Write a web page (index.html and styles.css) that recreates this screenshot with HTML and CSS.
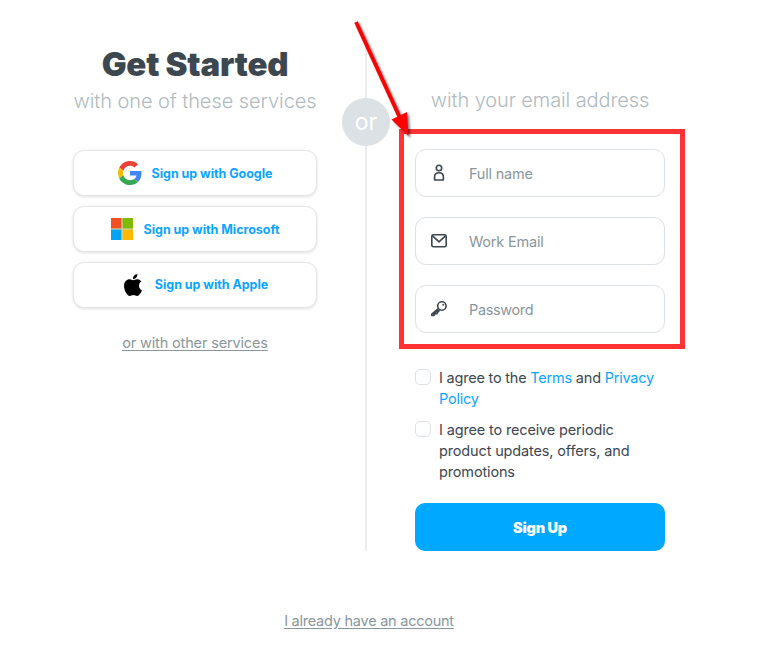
FILE: index.html
```html
<!DOCTYPE html>
<html lang="en">
<head>
<meta charset="utf-8">
<title>Get Started</title>
<link rel="stylesheet" href="styles.css">
</head>
<body>
<main class="signup">
  <div class="columns">
    <section class="services">
      <h1 class="title">Get Started</h1>
      <p class="subtitle first"><span>with one of these services</span></p>
      <div class="service-list">
        <button class="service google">
          <svg width="24" height="24" viewBox="0 0 48 48"><path fill="#EA4335" d="M24 9.5c3.54 0 6.71 1.22 9.21 3.6l6.85-6.85C35.9 2.38 30.47 0 24 0 14.62 0 6.51 5.38 2.56 13.22l7.98 6.19C12.43 13.72 17.74 9.5 24 9.5z"/><path fill="#4285F4" d="M46.98 24.55c0-1.57-.15-3.09-.38-4.55H24v9.02h12.94c-.58 2.96-2.26 5.48-4.78 7.18l7.73 6c4.51-4.18 7.09-10.36 7.09-17.65z"/><path fill="#FBBC05" d="M10.53 28.59c-.48-1.45-.76-2.99-.76-4.59s.27-3.14.76-4.59l-7.98-6.19C.92 16.46 0 20.12 0 24c0 3.88.92 7.54 2.56 10.78l7.97-6.19z"/><path fill="#34A853" d="M24 48c6.48 0 11.93-2.13 15.89-5.81l-7.73-6c-2.15 1.45-4.92 2.3-8.16 2.3-6.26 0-11.57-4.22-13.47-9.91l-7.98 6.19C6.51 42.62 14.62 48 24 48z"/></svg>
          <span>Sign up with Google</span>
        </button>
        <button class="service microsoft">
          <svg width="22" height="22" viewBox="0 0 22 22"><path fill="#c8d6b0" d="M0 0h22v22H0z"/><path fill="#f25022" d="M0 0h10.4v10.4H0z"/><path fill="#7fba00" d="M11.6 0H22v10.4H11.6z"/><path fill="#00a4ef" d="M0 11.6h10.4V22H0z"/><path fill="#ffb900" d="M11.6 11.6H22V22H11.6z"/></svg>
          <span>Sign up with Microsoft</span>
        </button>
        <button class="service apple">
          <svg width="18" height="22" viewBox="0 0 814 1000"><path d="M788.1 340.9c-5.8 4.5-108.2 62.2-108.2 190.5 0 148.4 130.3 200.9 134.2 202.2-.6 3.2-20.7 71.9-68.7 141.9-42.8 61.6-87.5 123.1-155.5 123.1s-85.5-39.5-164-39.5c-76.5 0-103.7 40.8-165.9 40.8s-105.6-57-155.5-127C46.7 790.7 0 663 0 541.8c0-194.4 126.4-297.5 250.8-297.5 66.1 0 121.2 43.4 162.7 43.4 39.5 0 101.1-46 176.3-46 28.5 0 130.9 2.6 198.3 99.2zM554.1 159.4c31.1-36.9 53.1-88.1 53.1-139.3 0-7.1-.6-14.3-1.9-20.1-50.6 1.9-110.8 33.7-147.1 75.8-28.5 32.4-55.1 83.6-55.1 135.5 0 7.8 1.3 15.6 1.9 18.1 3.2.6 8.4 1.3 13.6 1.3 45.4 0 102.5-30.4 135.5-71.3z"/></svg>
          <span>Sign up with Apple</span>
        </button>
      </div>
      <a class="link other">or with other services</a>
    </section>

    <div class="divider"><span class="or">or</span></div>

    <section class="email">
      <p class="subtitle"><span>with your email address</span></p>
      <div class="fields">
        <label class="field">
          <svg width="18" height="18" viewBox="0 0 18 18"><circle cx="9" cy="4" r="2.700"/><path d="M4.600 16v-3c0-2.800 1.700-4.200 4.400-4.200s4.400 1.400 4.400 4.200v3z"/></svg>
          <span>Full name</span>
        </label>
        <label class="field">
          <svg width="18" height="18" viewBox="0 0 18 18"><rect x="1.800" y="2.800" width="14.400" height="12" rx="1.600"/><path d="M2.300 3.600 9 9.800l6.700-6.200"/></svg>
          <span>Work Email</span>
        </label>
        <label class="field">
          <svg width="18" height="18" viewBox="0 0 18 18"><circle cx="11.900" cy="6" r="4.200"/><path d="M8.300 8.500 1.800 14v1.500h2l1.500-1.700h1.500l1-1.600 1.800-1.900M3 14.500l5.500-4.800"/><circle class="dot" cx="13.300" cy="4.800" r="1"/></svg>
          <span class="password">Password</span>
        </label>
      </div>
      <div class="consents">
        <div class="consent"><i class="box"></i><p class="terms">I agree to the <a>Terms</a> and <a>Privacy<br>Policy</a></p></div>
        <div class="consent"><i class="box"></i><p>I agree to receive periodic<br>product updates, offers, and<br>promotions</p></div>
      </div>
      <button class="submit"><span>Sign Up</span></button>
    </section>
  </div>
  <a class="link account">I already have an account</a>
</main>
<div class="highlight"></div>
<svg class="arrow" width="80" height="140" viewBox="0 0 80 140"><path class="shaft" d="M16 12 60 108"/><path class="head" d="M51.500 109.500 67 102 68.500 126z"/></svg>
</body>
</html>
```
FILE: styles.css
```css
* { box-sizing: border-box; }
body {
  margin: 0;
  height: 652px;
  overflow: hidden;
  position: relative;
  background: #fff;
  color: #3c474f;
  font-family: Inter, "Liberation Sans", sans-serif;
  font-size: 14.5px;
}
h1, p { margin: 0; }
button { font: inherit; margin: 0; padding: 0; border: 0; }
span, a { white-space: nowrap; }
.signup { display: flex; flex-direction: column; align-items: center; padding: 40px 19px 0 0; }
.columns { display: flex; width: 592px; height: 511px; }
.services { width: 244px; display: flex; flex-direction: column; align-items: center; }
.title { height: 48px; line-height: 49px; font-size: 33px; font-weight: 900; letter-spacing: -.2px; color: #3c474f; white-space: nowrap; }
.subtitle { height: 26px; line-height: 27px; font-size: 20px; font-weight: 300; letter-spacing: -.06px; color: #b0babf; display: flex; justify-content: center; }
.email .subtitle { letter-spacing: -.1px; }
.service-list { display: flex; flex-direction: column; gap: 10px; width: 244px; margin-top: 36px; }
.service {
  display: flex; align-items: center; justify-content: center;
  height: 46px; border: 1px solid #e4e5e7; border-radius: 11px; background: #fff;
  box-shadow: 0 1px 3px rgba(0, 0, 0, .12);
  color: #0aa5ff; font-size: 12.5px; font-weight: 700; letter-spacing: -.04px;
}
.google { gap: 10px; }
.microsoft { gap: 11px; }
.apple { gap: 13px; padding: 0 0 1px 2px; }
.link { color: #8a969d; text-decoration: underline; text-underline-offset: 2px; line-height: 20px; }
.other { margin-top: 25px; letter-spacing: -.15px; }
.divider { width: 98px; display: flex; justify-content: center; background: linear-gradient(#e9edf0, #e9edf0) 48px 0 / 2px 100% no-repeat; }
.or { width: 48px; height: 48px; margin-top: 58px; border-radius: 50%; background: #dbe1e5; color: #fff; font-size: 23px; line-height: 49px; text-align: center; }
.email { width: 250px; padding-top: 47px; }
.fields { display: flex; flex-direction: column; gap: 20px; margin-top: 36px; }
.field { display: flex; align-items: center; height: 48px; gap: 21px; padding-left: 14px; border: 1px solid #dce1e5; border-radius: 11px; color: #8a969d; letter-spacing: -.2px; }
.field .password { letter-spacing: -.36px; }
.field svg { fill: none; stroke: #3c474f; stroke-width: 1.6; stroke-linejoin: round; }
.field .dot { fill: #3c474f; stroke: none; }
.consents { display: flex; flex-direction: column; gap: 10px; margin-top: 34px; }
.consent { display: flex; gap: 8px; line-height: 21px; letter-spacing: -.15px; }
.consent .terms { letter-spacing: -.21px; }
.consent a { color: #0aa5ff; }
.box { width: 16px; height: 16px; margin-top: 2px; border: 1px solid #dce1e5; border-radius: 5px; flex: none; }
.submit { display: block; width: 250px; height: 48px; margin-top: 21px; border-radius: 10px; background: #00a8ff; color: #fff; font-weight: 900; letter-spacing: -.2px; }
.account { margin-top: 60px; letter-spacing: -.24px; }
.highlight { position: absolute; left: 399px; top: 129px; width: 286px; height: 220px; border: 5px solid #ff3333; }
.arrow { position: absolute; left: 340px; top: 10px; filter: drop-shadow(2px 2px 1px rgba(0, 0, 0, .5)); }
.shaft { stroke: #f00; stroke-width: 3.8; }
.head { fill: #f00; }
```
